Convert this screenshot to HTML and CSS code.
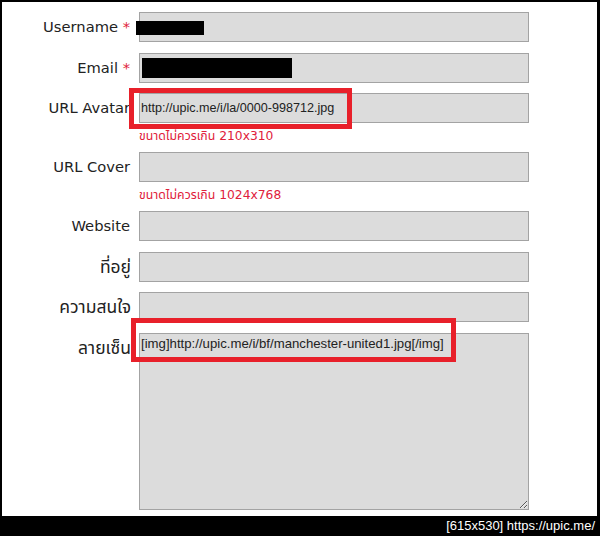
FILE: index.html
```html
<!DOCTYPE html>
<html>
<head>
<meta charset="utf-8">
<link rel="stylesheet" href="styles.css">
</head>
<body>
<div class="frame">
  <form class="form">
    <div class="row">
      <label class="label">Username <span class="req">*</span></label>
      <div class="field">
        <input class="inp" type="text" value="">
        <span class="redact redact-user"></span>
      </div>
    </div>
    <div class="row">
      <label class="label">Email <span class="req">*</span></label>
      <div class="field">
        <input class="inp" type="text" value="">
        <span class="redact redact-mail"></span>
      </div>
    </div>
    <div class="row">
      <label class="label">URL Avatar</label>
      <div class="field">
        <input class="inp" type="text" value="http://upic.me/i/la/0000-998712.jpg">
        <span class="mark mark-avatar"></span>
      </div>
    </div>
    <div class="hint">ขนาดไม่ควรเกิน 210x310</div>
    <div class="row">
      <label class="label">URL Cover</label>
      <div class="field"><input class="inp" type="text" value=""></div>
    </div>
    <div class="hint">ขนาดไม่ควรเกิน 1024x768</div>
    <div class="row">
      <label class="label">Website</label>
      <div class="field"><input class="inp" type="text" value=""></div>
    </div>
    <div class="row">
      <label class="label label-th">ที่อยู่</label>
      <div class="field"><input class="inp" type="text" value=""></div>
    </div>
    <div class="row">
      <label class="label label-th">ความสนใจ</label>
      <div class="field"><input class="inp" type="text" value=""></div>
    </div>
    <div class="row row-top">
      <label class="label label-th">ลายเซ็น</label>
      <div class="field">
        <textarea class="area">[img]http://upic.me/i/bf/manchester-united1.jpg[/img]</textarea>
        <span class="mark mark-sig"></span>
      </div>
    </div>
  </form>
</div>
<div class="footer">[615x530] https://upic.me/</div>
</body>
</html>
```
FILE: styles.css
```css
html, body {
  margin: 0;
  padding: 0;
  background: #000;
}
body {
  width: 600px;
  height: 536px;
  overflow: hidden;
}
.frame {
  margin: 2px 0 0 2px;
  width: 595px;
  height: 514px;
  background: #fff;
  overflow: hidden;
}
.form {
  display: flex;
  flex-direction: column;
  padding-top: 10px;
}
.row {
  display: grid;
  grid-template-columns: 128px 390px;
  column-gap: 9px;
  align-items: center;
  margin-bottom: 10.5px;
}
.row-top {
  align-items: start;
  margin-bottom: 0;
  margin-top: 0.5px;
}
.label {
  text-align: right;
  white-space: nowrap;
  font-family: "DejaVu Sans", "Noto Sans Thai", "Noto Sans Thai Looped", "Noto Sans", sans-serif;
  font-size: 14.7px;
  line-height: 30px;
  color: #222;
}
.label-th {
  font-size: 17.5px;
  margin-right: -1px;
}
.req {
  color: #e0203a;
}
.field {
  position: relative;
  height: 30px;
}
.row-top .field {
  height: 177px;
}
.inp {
  box-sizing: border-box;
  display: block;
  width: 390px;
  height: 30px;
  margin: 0;
  padding: 0 1px;
  border: 1px solid #a3a3a3;
  background: #dcdcdc;
  font-family: "Liberation Sans", Arial, sans-serif;
  font-size: 12.6px;
  color: #222;
  outline: none;
}
.area {
  box-sizing: border-box;
  display: block;
  width: 390px;
  height: 177px;
  margin: 0;
  padding: 1px 1px;
  border: 1px solid #a3a3a3;
  background: #dcdcdc;
  font-family: "Liberation Sans", Arial, sans-serif;
  font-size: 13.2px;
  line-height: 18px;
  color: #222;
  outline: none;
}
.hint {
  margin: -6.5px 0 7px 137px;
  line-height: 18px;
  font-family: "DejaVu Sans", "Noto Sans Thai", "Noto Sans Thai Looped", sans-serif;
  font-size: 12.3px;
  color: #e0203a;
}
.redact {
  position: absolute;
  background: #000;
}
.redact-user {
  left: -3px;
  top: 9px;
  width: 68px;
  height: 14px;
}
.redact-mail {
  left: 3px;
  top: 5px;
  width: 150px;
  height: 20px;
}
.mark {
  position: absolute;
  box-sizing: border-box;
  border: 5px solid #e8202a;
}
.mark-avatar {
  left: -10px;
  top: -5px;
  width: 223px;
  height: 41px;
}
.mark-sig {
  left: -8px;
  top: -15px;
  width: 325px;
  height: 44px;
}
.footer {
  height: 20px;
  line-height: 20px;
  text-align: right;
  padding-right: 5px;
  font-family: "Liberation Sans", Arial, sans-serif;
  font-size: 13px;
  color: #fff;
}
```
